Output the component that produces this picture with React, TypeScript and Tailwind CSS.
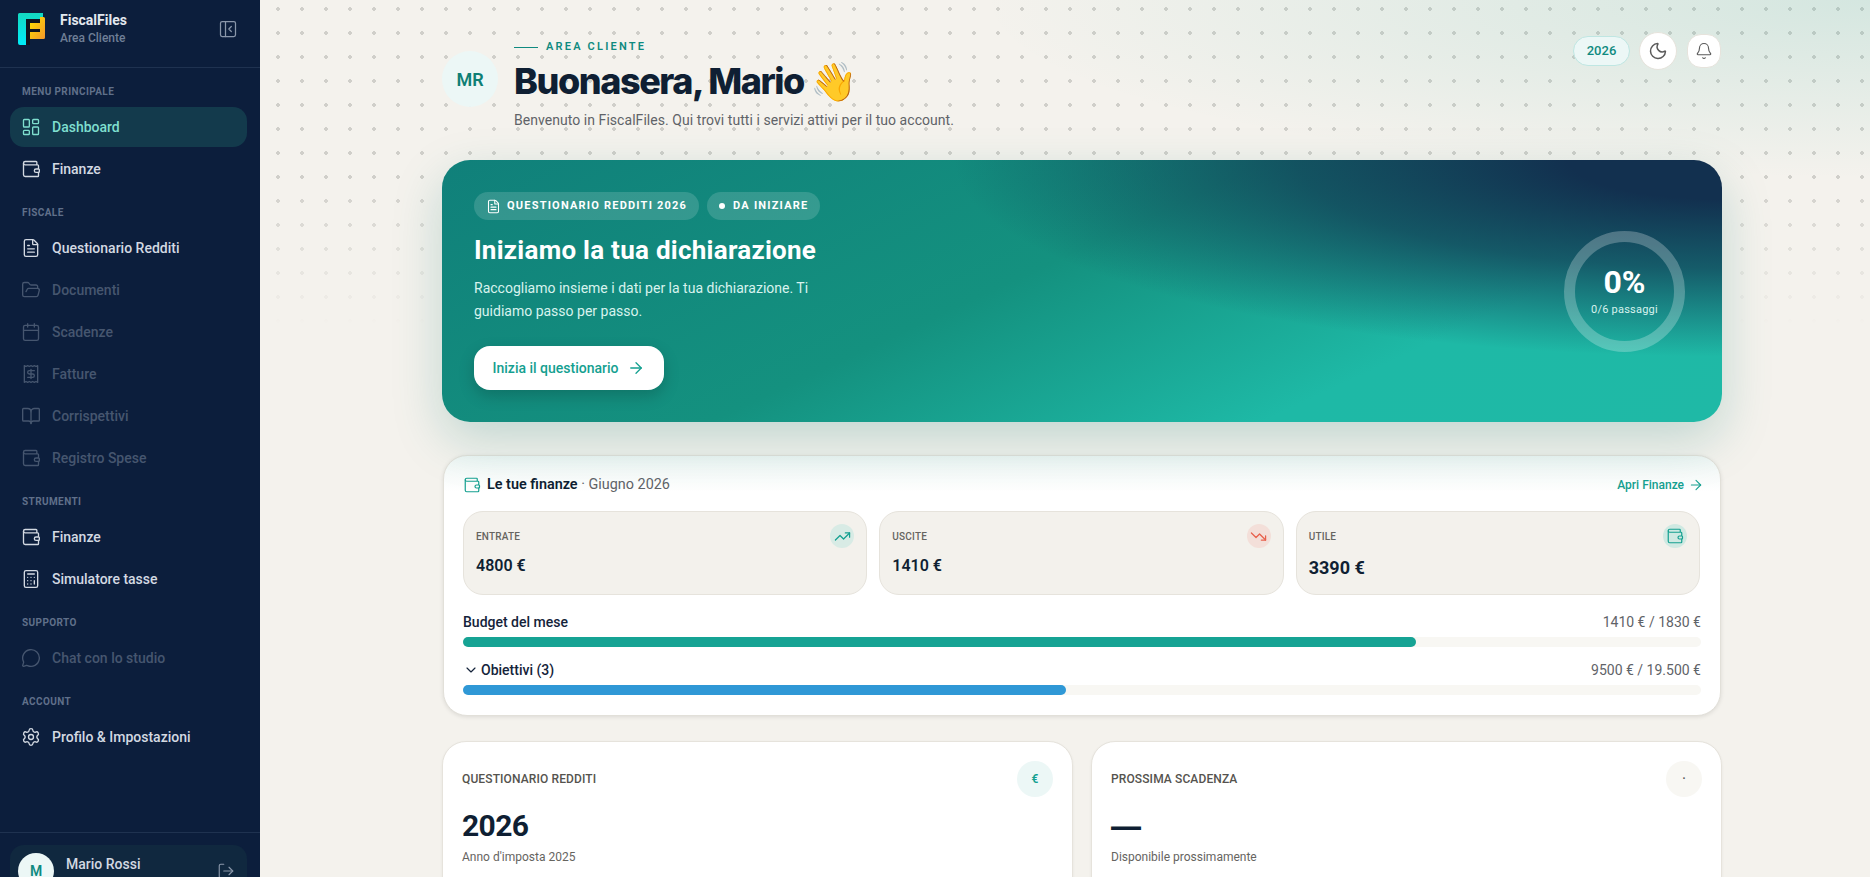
import React from "react";
import {
  LayoutDashboard, Wallet, FileText, FolderOpen, Calendar, Receipt, BookOpen, Calculator,
  MessageCircle, Settings, PanelLeftClose, LogOut, Moon, Bell, ArrowRight, TrendingUp, TrendingDown, ChevronDown,
} from "lucide-react";

type Item = { label: string; icon: React.ComponentType<{ className?: string; strokeWidth?: number }>; active?: boolean; off?: boolean };
const sections: { title: string; items: Item[] }[] = [
  { title: "MENU PRINCIPALE", items: [{ label: "Dashboard", icon: LayoutDashboard, active: true }, { label: "Finanze", icon: Wallet }] },
  { title: "FISCALE", items: [
    { label: "Questionario Redditi", icon: FileText },
    { label: "Documenti", icon: FolderOpen, off: true },
    { label: "Scadenze", icon: Calendar, off: true },
    { label: "Fatture", icon: Receipt, off: true },
    { label: "Corrispettivi", icon: BookOpen, off: true },
    { label: "Registro Spese", icon: Wallet, off: true },
  ] },
  { title: "STRUMENTI", items: [{ label: "Finanze", icon: Wallet }, { label: "Simulatore tasse", icon: Calculator }] },
  { title: "SUPPORTO", items: [{ label: "Chat con lo studio", icon: MessageCircle, off: true }] },
  { title: "ACCOUNT", items: [{ label: "Profilo & Impostazioni", icon: Settings }] },
];

function Logo() {
  return (
    <svg width="27" height="32" viewBox="0 0 27 32" className="shrink-0">
      <defs>
        <linearGradient id="lg1" x1="0" y1="0" x2="0" y2="1"><stop offset="0" stopColor="#14d8c0" /><stop offset="1" stopColor="#00ecf8" /></linearGradient>
        <linearGradient id="lg2" x1="0" y1="0" x2="1" y2="1"><stop offset="0" stopColor="#ffe100" /><stop offset="1" stopColor="#f5972a" /></linearGradient>
      </defs>
      <path d="M1.5 0H25v6H8v26H2a2 2 0 0 1-2-2V1.5A1.5 1.5 0 0 1 1.5 0Z" fill="url(#lg1)" />
      <path d="M22 4h3.5A1.5 1.5 0 0 1 27 5.5V24.5a1.5 1.5 0 0 1-1.5 1.5H12v-7h10v-3H12V10h10Z" fill="url(#lg2)" />
      <path d="M8 6h14v4H12v6h10v3H12v13H8Z" fill="#10151f" />
    </svg>
  );
}

function Side() {
  return (
    <aside className="flex h-[925px] w-[260px] shrink-0 flex-col bg-[#0c1e3c] font-['Roboto',sans-serif]">
      <div className="flex h-[68px] shrink-0 items-center border-b border-[#1f3250] pb-[10px] pl-[18px] pr-[22px]">
        <Logo />
        <div className="ml-[15px] flex-1">
          <div className="text-[14px] font-bold leading-[18px] text-[#e3e8ef]">FiscalFiles</div>
          <div className="text-[12px] font-medium leading-[18px] text-[#6f7f96]">Area Cliente</div>
        </div>
        <PanelLeftClose className="h-5 w-5 text-[#8a97aa]" strokeWidth={1.5} />
      </div>
      <nav className="flex-1 pl-[10px] pr-[13px]">
        {sections.map((s) => (
          <div key={s.title} className="pt-[16px]">
            <div className="mb-[7px] h-4 pl-3 text-[10px] font-bold leading-4 tracking-[0.04em] text-[#60708a]">{s.title}</div>
            <div className="flex flex-col gap-[2px]">
              {s.items.map((it) => {
                const I = it.icon;
                return (
                  <div
                    key={it.label + s.title}
                    className={
                      it.active
                        ? "flex h-10 items-center gap-[11px] rounded-[14px] bg-[#133a4c] px-[11px] text-[#7fdfcf]"
                        : it.off
                        ? "flex h-10 items-center gap-[11px] rounded-[14px] px-[11px] text-[#46566f]"
                        : "flex h-10 items-center gap-[11px] rounded-[14px] px-[11px] text-[#d3d9e2]"
                    }
                  >
                    <I className="h-5 w-5 shrink-0" strokeWidth={1.6} />
                    <span className="text-[14px] font-medium">{it.label}</span>
                  </div>
                );
              })}
            </div>
          </div>
        ))}
      </nav>
      <div className="shrink-0 border-t border-[#1f3250] pb-3 pl-[10px] pr-[13px] pt-3">
        <div className="flex h-[68px] gap-3 rounded-[14px] bg-[#10283f] pl-2 pr-[12px] pt-2">
          <div className="flex h-9 w-9 shrink-0 items-center justify-center rounded-full bg-[#ecf7f6] text-[14px] font-semibold text-[#0f8a80]">M</div>
          <div className="flex-1 pt-[1px] text-[14px] font-medium leading-5 text-[#d3d9e2]">Mario Rossi</div>
          <LogOut className="mt-[9px] h-[18px] w-[18px] text-[#8a97aa]" strokeWidth={1.5} />
        </div>
      </div>
    </aside>
  );
}

function Stat({ label, value, big, icon, iconCls }: { label: string; value: string; big?: boolean; icon: React.ReactNode; iconCls: string }) {
  return (
    <div className="flex h-[84px] flex-col rounded-[20px] border border-[#e6e3dc] bg-[#f3f1ec] px-3 pt-3">
      <div className="flex h-6 items-center justify-between">
        <span className="text-[10px] font-medium tracking-[0.02em] text-[#66645f]">{label}</span>
        <span className={"flex h-6 w-6 items-center justify-center rounded-full " + iconCls}>{icon}</span>
      </div>
      <div className={big ? "mt-2 text-[18px] font-bold leading-6 text-[#0f1f33]" : "mt-[6px] text-[16px] font-semibold leading-6 text-[#0f1f33]"}>{value}</div>
    </div>
  );
}

function Bar({ pct, cls }: { pct: number; cls: string }) {
  return (
    <div className="mt-[5px] h-[10px] w-full rounded-full bg-[#f8f7f3]">
      <div className={"h-full rounded-full " + cls} style={{ width: pct + "%" }} />
    </div>
  );
}

function Small({ label, value, valueCls, sub, icon, iconCls }: { label: string; value: string; valueCls: string; sub: string; icon: string; iconCls: string }) {
  return (
    <div className="h-[180px] rounded-[24px] border border-[#e6e3dc] bg-white px-[19px] pt-[19px] shadow-[0_1px_3px_rgba(0,0,0,0.06)]">
      <div className="flex items-center justify-between">
        <span className="text-[12px] font-medium tracking-[0.01em] text-[#55534e]">{label}</span>
        <span className={"flex h-9 w-9 items-center justify-center rounded-full text-[12px] font-semibold " + iconCls}>{icon}</span>
      </div>
      <div className={"mt-[11px] text-[30px] font-bold leading-9 text-[#0f1f33] " + valueCls}>{value}</div>
      <div className="mt-[4px] text-[12px] leading-[18px] text-[#66645f]">{sub}</div>
    </div>
  );
}

export default function App() {
  return (
    <div className="flex h-[877px] w-[1870px] overflow-hidden bg-[#f4f2ed] font-['Roboto',sans-serif]">
      <Side />
      <main className="relative flex-1 overflow-hidden pl-[182px] pr-[148px]">
        <div className="pointer-events-none absolute inset-x-0 top-0 h-[325px] bg-[radial-gradient(#d0cfca_1.6px,transparent_1.6px)] bg-[length:24px_24px] bg-[position:6px_-3px] [mask-image:linear-gradient(to_bottom,black_55%,transparent)]" />
        <div className="pointer-events-none absolute right-0 top-0 h-[180px] w-[900px] bg-[radial-gradient(ellipse_at_top_right,rgba(20,160,144,0.14),transparent_70%)]" />
        <div className="relative">
          <header className="flex h-[160px] items-start justify-between pt-[32px]">
            <div className="flex">
              <div className="mt-[19px] flex h-14 w-14 items-center justify-center rounded-full bg-[#ecf7f6] text-[18px] font-semibold text-[#0f7f75]">MR</div>
              <div className="ml-4 pt-[8px]">
                <div className="flex h-[14px] items-center gap-2">
                  <span className="h-px w-6 bg-[#0f8a80]" />
                  <span className="text-[11px] font-semibold tracking-[0.2em] text-[#0f8a80]">AREA CLIENTE</span>
                </div>
                <h1 className="mt-[5px] flex items-center gap-[6px] font-['Inter',sans-serif] text-[36px] font-extrabold leading-[44px] tracking-[-0.04em] text-[#0f1f33]">
                  Buonasera, Mario <span className="text-[38px] tracking-normal">👋</span>
                </h1>
                <p className="mt-[7px] text-[14px] leading-5 tracking-[0.05px] text-[#5f6368]">Benvenuto in FiscalFiles. Qui trovi tutti i servizi attivi per il tuo account.</p>
              </div>
            </div>
            <div className="mr-px flex items-center gap-[10px]">
              <span className="-mr-px flex h-[30px] w-[57px] items-center justify-center rounded-full border border-[#bfe6e2] bg-[#ecf7f6] text-[13px] font-medium text-[#0f8a80]">2026</span>
              <span className="flex h-[38px] w-[38px] items-center justify-center rounded-full border border-[#e6e3dc] bg-white"><Moon className="h-5 w-5 text-[#5a5a5a]" strokeWidth={1.75} /></span>
              <span className="flex h-[34px] w-[34px] items-center justify-center rounded-[14px] border border-[#e6e3dc] bg-white"><Bell className="h-[18px] w-[18px] text-[#5a5a5a]" strokeWidth={1.5} /></span>
            </div>
          </header>

          <section className="relative flex h-[262px] items-center justify-between overflow-hidden rounded-[28px] pl-8 pr-[37px] shadow-[0_18px_50px_rgba(15,120,110,0.22)] [background:radial-gradient(ellipse_60%_75%_at_100%_0%,#12304f_0%,#12304f_20%,rgba(18,60,85,0.75)_55%,transparent_100%),linear-gradient(155deg,#10807a_0%,#14917f_45%,#1eb9a6_75%,#1fb9a6_100%)]">
            <div>
              <div className="flex gap-2">
                <span className="flex h-7 items-center gap-[6px] rounded-full bg-white/15 px-3 text-[11px] font-bold tracking-[0.11em] text-white"><FileText className="h-[15px] w-[15px]" strokeWidth={1.75} />QUESTIONARIO REDDITI 2026</span>
                <span className="flex h-7 items-center gap-2 rounded-full bg-white/15 px-3 text-[11px] font-bold tracking-[0.11em] text-white"><span className="h-[6px] w-[6px] rounded-full bg-white" />DA INIZIARE</span>
              </div>
              <h2 className="mt-[11px] text-[26px] font-bold leading-[38px] tracking-[0.01em] text-white">Iniziamo la tua dichiarazione</h2>
              <p className="mt-[8px] w-[360px] text-[14px] leading-[23px] text-[#d8f3ee]">Raccogliamo insieme i dati per la tua dichiarazione. Ti guidiamo passo per passo.</p>
              <button className="mt-[23px] flex h-11 w-[190px] items-center justify-center gap-[9px] rounded-[16px] bg-white text-[14px] font-medium text-[#14a090] shadow-[0_6px_16px_rgba(0,0,0,0.18)]">Inizia il questionario <ArrowRight className="h-[18px] w-[18px]" strokeWidth={1.75} /></button>
            </div>
            <div className="flex h-[121px] w-[121px] flex-col items-center justify-center rounded-full border-[11px] border-white/25 text-white">
              <span className="text-[32px] font-bold leading-9">0%</span>
              <span className="mt-[2px] text-[11px] leading-4 tracking-[0.02em] text-[#d8f3ee]">0/6 passaggi</span>
            </div>
          </section>

          <section className="mx-px mt-[33px] h-[261px] rounded-[24px] border border-[#e2e0d9] bg-white bg-[linear-gradient(to_bottom,#eff6f4,white_36px)] pl-[19px] pr-[19px] shadow-[0_1px_4px_rgba(0,0,0,0.1)]">
            <div className="flex h-[55px] items-center justify-between pt-[3px]">
              <div className="flex items-center gap-[6px] text-[14.4px]">
                <Wallet className="h-[18px] w-[18px] text-[#14a090]" strokeWidth={1.6} />
                <span><b className="font-semibold text-[#0f1f33]">Le tue finanze</b><span className="text-[#5f6368]"> · Giugno 2026</span></span>
              </div>
              <span className="-mr-[3px] flex items-center gap-1 text-[12px] font-medium text-[#14a090]">Apri Finanze <ArrowRight className="h-4 w-4" strokeWidth={1.6} /></span>
            </div>
            <div className="mr-px grid grid-cols-3 gap-3">
              <Stat label="ENTRATE" value="4800 €" icon={<TrendingUp className="h-[17px] w-[17px] text-[#14a090]" strokeWidth={1.75} />} iconCls="bg-[#d8ebe5]" />
              <Stat label="USCITE" value="1410 €" icon={<TrendingDown className="h-[17px] w-[17px] text-[#e8604c]" strokeWidth={1.75} />} iconCls="bg-[#f3dfd9]" />
              <Stat label="UTILE" value="3390 €" big icon={<Wallet className="h-[18px] w-[18px] text-[#14a090]" strokeWidth={1.6} />} iconCls="bg-[#cfe9e2]" />
            </div>
            <div className="mt-[17px] flex h-5 items-center justify-between text-[14px]">
              <span className="font-medium text-[#14233a]">Budget del mese</span>
              <span className="text-[#5f6368]">1410 € / 1830 €</span>
            </div>
            <Bar pct={77} cls="bg-[#16a394]" />
            <div className="mt-[13px] flex h-5 items-center justify-between text-[14px]">
              <span className="flex items-center gap-[2px] font-medium text-[#14233a]"><ChevronDown className="h-4 w-4" strokeWidth={1.75} />Obiettivi (3)</span>
              <span className="text-[#5f6368]">9500 € / 19.500 €</span>
            </div>
            <Bar pct={48.7} cls="bg-[#2f98d6]" />
          </section>

          <div className="mt-[25px] grid grid-cols-2 gap-[18px]">
            <Small label="QUESTIONARIO REDDITI" value="2026" valueCls="tracking-[-0.02em]" sub="Anno d'imposta 2025" icon="€" iconCls="bg-[#ecf7f6] text-[#14a090]" />
            <Small label="PROSSIMA SCADENZA" value="—" valueCls="font-['Inter',sans-serif]" sub="Disponibile prossimamente" icon="·" iconCls="bg-[#f8f7f3] text-[#555]" />
          </div>
        </div>
      </main>
    </div>
  );
}
